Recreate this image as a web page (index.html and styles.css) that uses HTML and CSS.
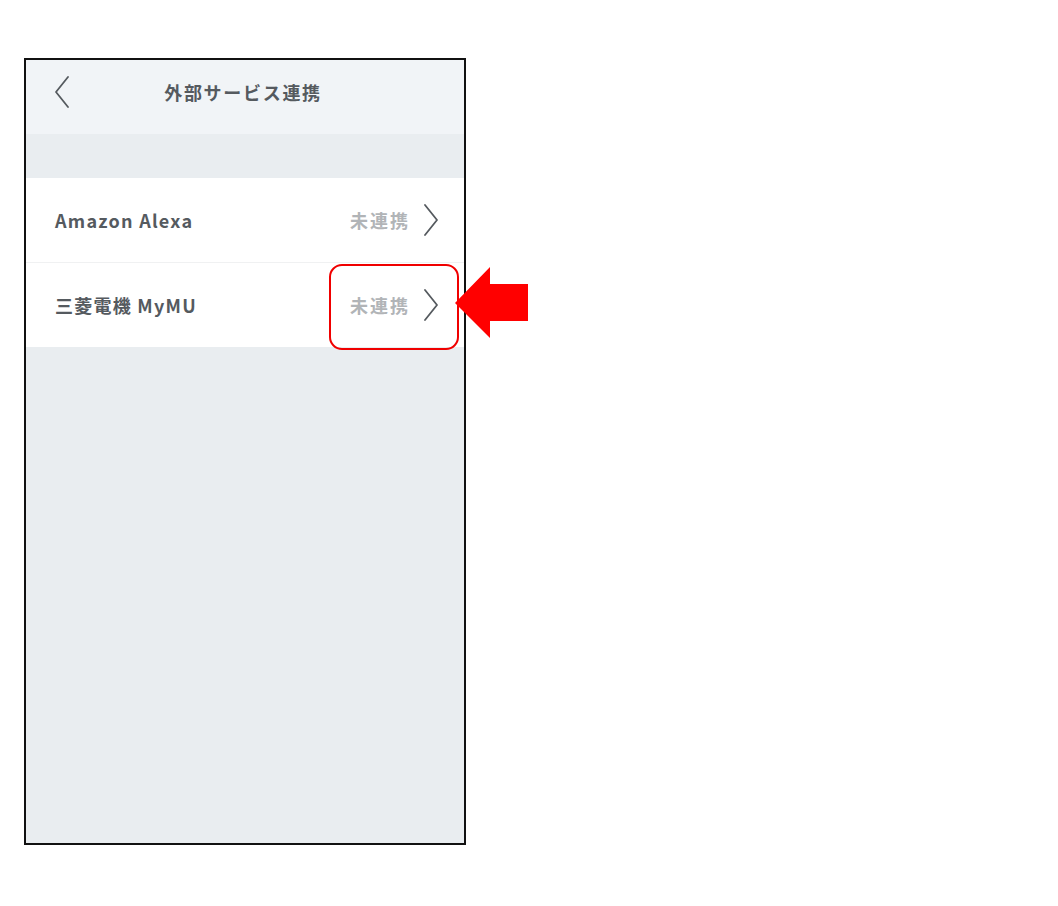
FILE: index.html
```html
<!DOCTYPE html>
<html lang="ja">
<head>
<meta charset="utf-8">
<link rel="stylesheet" href="styles.css">
</head>
<body>
<div class="stage">
  <div class="phone">
    <header class="nav">
      <svg class="back" width="16" height="32" viewBox="0 0 16 32"><polyline points="14,1 2,16 14,31" fill="none" stroke="#555a5f" stroke-width="1.8" stroke-linejoin="round" stroke-linecap="round"/></svg>
      <h1 class="title">外部サービス連携</h1>
      <span class="nav-spacer"></span>
    </header>
    <div class="band"></div>
    <ul class="list">
      <li class="row">
        <span class="name">Amazon Alexa</span>
        <span class="status">未連携</span>
        <svg class="chev" width="16" height="32" viewBox="0 0 16 32"><polyline points="2,1 14,16 2,31" fill="none" stroke="#555a5f" stroke-width="1.8" stroke-linejoin="round" stroke-linecap="round"/></svg>
      </li>
      <li class="row">
        <span class="name">三菱電機 MyMU</span>
        <span class="status">未連携</span>
        <svg class="chev" width="16" height="32" viewBox="0 0 16 32"><polyline points="2,1 14,16 2,31" fill="none" stroke="#555a5f" stroke-width="1.8" stroke-linejoin="round" stroke-linecap="round"/></svg>
      </li>
    </ul>
  </div>
  <div class="highlight"></div>
  <svg class="pointer" width="73" height="71" viewBox="0 0 73 71"><polygon points="0,36 35,0 35,17 73,17 73,54 35,54 35,71" fill="#ff0000"/></svg>
</div>
</body>
</html>
```

FILE: styles.css
```css
* { box-sizing: border-box; }
html, body { margin: 0; padding: 0; background: #ffffff; }
body {
  font-family: "Noto Sans CJK JP", "Noto Sans", sans-serif;
  color: #555a5f;
}
.stage {
  position: relative;
  width: 1058px;
  height: 906px;
  padding: 58px 0 0 24px;
}
.phone {
  width: 442px;
  height: 787px;
  border: 2px solid #111;
  background: #e9edf0;
  display: flex;
  flex-direction: column;
}
.nav {
  height: 74px;
  background: #f1f4f7;
  display: flex;
  align-items: center;
  padding: 0 28px 10px 28px;
}
.back { display: block; }
.title {
  flex: 1;
  margin: 0;
  text-align: center;
  font-size: 18px;
  font-weight: 700;
  letter-spacing: 1.7px;
  color: #555a5f;
  padding-right: 4px;
}
.nav-spacer { width: 16px; }
.band { height: 44px; background: #e9edf0; }
.list {
  list-style: none;
  margin: 0;
  padding: 0;
  background: #fff;
}
.row {
  height: 84px;
  display: flex;
  align-items: center;
  padding: 0 25px 0 29px;
}
.row + .row { border-top: 1px solid #f0f1f2; height: 85px; }
.name {
  flex: 1;
  font-size: 18px;
  font-weight: 700;
  letter-spacing: 1.25px;
  color: #555a5f;
}
.status {
  font-size: 18px;
  font-weight: 700;
  letter-spacing: 2px;
  color: #b1b4b7;
  margin-right: 13px;
}
.chev { display: block; }
.highlight {
  position: absolute;
  left: 329px;
  top: 264px;
  width: 130px;
  height: 86px;
  border: 2px solid #f00000;
  border-radius: 13px;
}
.pointer {
  position: absolute;
  left: 455px;
  top: 267px;
}
```
